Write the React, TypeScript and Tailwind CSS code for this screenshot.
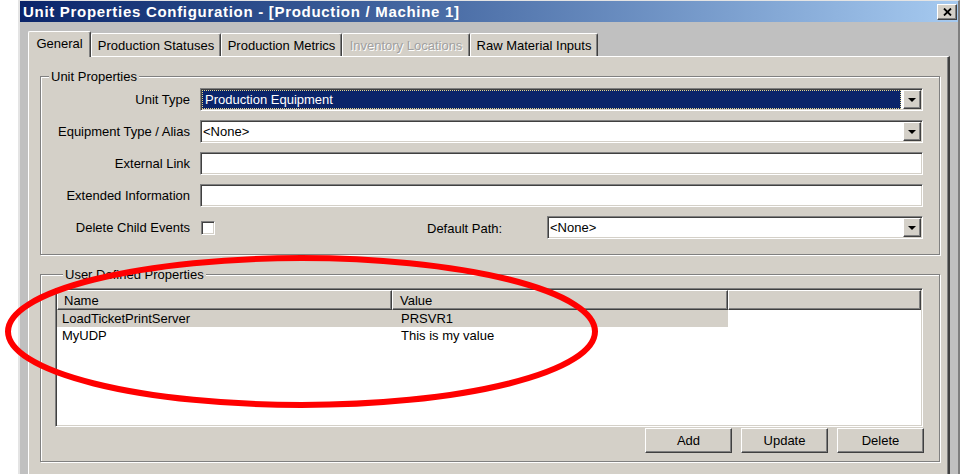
import React from 'react'

// Win2k-style bevels
const sunken =
  'border border-t-[#808080] border-l-[#808080] border-r-white border-b-white shadow-[inset_1px_1px_0_#404040,inset_-1px_-1px_0_#d4d0c8]'
const raised =
  'border border-t-white border-l-white border-r-[#404040] border-b-[#404040] shadow-[inset_-1px_-1px_0_#808080]'
const etched = 'border border-[#808080] shadow-[inset_1px_1px_0_#fff,1px_1px_0_#fff]'

function DropButton() {
  return (
    <span className={`${raised} w-[18px] h-full bg-[#d4d0c8] flex items-center justify-center shrink-0`}>
      <svg width="8" height="4" viewBox="0 0 8 4">
        <path d="M0 0h8L4 4z" fill="#000" />
      </svg>
    </span>
  )
}

function Combo({ value, focused }: { value?: string; focused?: boolean }) {
  return (
    <div className={`${sunken} flex-1 h-[23px] bg-white flex p-[1px]`}>
      <div className="flex-1 flex items-center min-w-0">
        {focused ? (
          <div className="flex-1 h-full bg-[#0a246a] text-white border border-dotted border-[#e6d68c] flex items-center pl-[2px] mr-[2px]">
            {value}
          </div>
        ) : (
          <span className="pl-[1px]">{value}</span>
        )}
      </div>
      <DropButton />
    </div>
  )
}

function TextBox() {
  return <div className={`${sunken} flex-1 h-[23px] bg-white`} />
}

function Row({ label, children }: { label: string; children: React.ReactNode }) {
  return (
    <div className="flex items-center h-[23px]">
      <div className="w-[149px] text-right shrink-0">{label}</div>
      <div className="ml-[10px] flex-1 flex items-center">{children}</div>
    </div>
  )
}

const tabs = [
  { label: 'General', w: 'w-[63px]', active: true },
  { label: 'Production Statuses', w: 'w-[130px]' },
  { label: 'Production Metrics', w: 'w-[121px]' },
  { label: 'Inventory Locations', w: 'w-[128px]', disabled: true },
  { label: 'Raw Material Inputs', w: 'w-[128px]' },
]

const rows = [
  { name: 'LoadTicketPrintServer', value: 'PRSVR1', selected: true },
  { name: 'MyUDP', value: 'This is my value' },
]

export default function App() {
  return (
    <div className="relative w-[964px] h-[474px] overflow-hidden bg-white text-[13px] leading-[15px] text-black font-['Liberation_Sans',Arial,sans-serif]">
      <div className="ml-[18px] w-[942px] h-[520px] bg-[#c0c0c0] border-l-2 border-l-[#e4e4e4] border-r-2 border-r-[#7f7f7f] border-t border-t-[#e4e4e4] flex flex-col">
        {/* Title bar */}
        <div className="h-[21px] shrink-0 flex items-center justify-between bg-gradient-to-r from-[#0a246a] to-[#a6caf0] pl-[3px] pr-[1px]">
          <span className="text-white font-bold text-[15px] leading-[18px] tracking-[0.7px]">
            Unit Properties Configuration - [Production / Machine 1]
          </span>
          <span className={`${raised} w-[20px] h-[16px] bg-[#d4d0c8] flex items-center justify-center`}>
            <svg width="9" height="8" viewBox="0 0 9 8">
              <path d="M1 0.5l7 7M8 0.5l-7 7" stroke="#000" strokeWidth="1.8" />
            </svg>
          </span>
        </div>

        {/* Tabs */}
        <div className="px-[8px] pt-[9px] flex-1 flex flex-col">
          <div className="flex items-end h-[26px] -mb-px relative z-10">
            {tabs.map((t) => (
              <div
                key={t.label}
                className={`${t.w} flex items-center justify-center bg-[#d4d0c8] border-t border-l border-t-white border-l-white border-r border-r-[#404040] shadow-[inset_-1px_0_0_#808080] rounded-t-[2px] ${
                  t.active ? 'h-[26px] pb-[3px]' : 'h-[23px] mb-px'
                } ${t.disabled ? 'text-[#a0a0a0] [text-shadow:1px_1px_0_#fff]' : ''}`}
              >
                {t.label}
              </div>
            ))}
          </div>

          {/* Tab page */}
          <div className="flex-1 bg-[#d4d0c8] border-t border-l border-t-white border-l-white border-r-2 border-r-[#404040] shadow-[inset_-1px_0_0_#808080] pt-[12px] pl-[11px] pr-[8px]">
            <fieldset className={`${etched} pr-[16px] pt-[4px] pb-[15px]`}>
              <legend className="ml-[8px] px-[2px] bg-[#d4d0c8] leading-[15px]">Unit Properties</legend>
              <div className="flex flex-col gap-[9px]">
                <Row label="Unit Type">
                  <Combo value="Production Equipment" focused />
                </Row>
                <Row label="Equipment Type / Alias">
                  <Combo value="<None>" />
                </Row>
                <Row label="External Link">
                  <TextBox />
                </Row>
                <Row label="Extended Information">
                  <TextBox />
                </Row>
                <div className="flex items-center h-[23px]">
                  <div className="w-[149px] text-right shrink-0">Delete Child Events</div>
                  <div className={`${sunken} ml-[11px] w-[14px] h-[14px] bg-white shrink-0`} />
                  <div className="ml-[212px] w-[120px] shrink-0 pt-[2px]">Default Path:</div>
                  <Combo value="<None>" />
                </div>
              </div>
            </fieldset>

            <fieldset className={`${etched} mt-[12px] pl-[14px] pr-[15px] pt-[6px] pb-[8px]`}>
              <legend className="ml-[8px] px-[2px] bg-[#d4d0c8] leading-[15px]">User Defined Properties</legend>
              <div className={`${sunken} h-[139px] mr-[1px] p-[1px] bg-white flex flex-col`}>
                <div className="flex h-[20px] shrink-0">
                  <div className={`${raised} w-[335px] bg-[#d4d0c8] pl-[6px] flex items-center`}>Name</div>
                  <div className={`${raised} w-[336px] bg-[#d4d0c8] pl-[7px] flex items-center`}>Value</div>
                  <div className={`${raised} flex-1 bg-[#d4d0c8]`} />
                </div>
                {rows.map((r) => (
                  <div key={r.name} className="flex h-[17px] items-center">
                    <div className={`flex w-[671px] h-full items-center ${r.selected ? 'bg-[#d4d0c8]' : ''}`}>
                      <div className="w-[335px] pl-[5px]">{r.name}</div>
                      <div className="w-[336px] pl-[9px]">{r.value}</div>
                    </div>
                  </div>
                ))}
              </div>
              <div className="flex justify-end gap-[9px] mt-[1px]">
                {['Add', 'Update', 'Delete'].map((b) => (
                  <button key={b} className={`${raised} w-[87px] h-[25px] bg-[#d4d0c8] flex items-center justify-center`}>
                    {b}
                  </button>
                ))}
              </div>
            </fieldset>
          </div>
        </div>
      </div>

      {/* Red annotation */}
      <svg className="absolute inset-0 pointer-events-none" width="964" height="474">
        <ellipse cx="301.5" cy="331.5" rx="293.5" ry="73.5" fill="none" stroke="#ff0000" strokeWidth="6" />
      </svg>
    </div>
  )
}
